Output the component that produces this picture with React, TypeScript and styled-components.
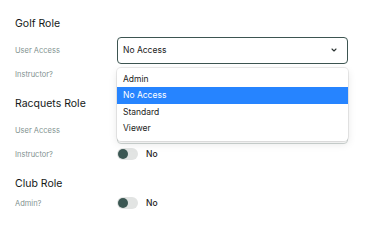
import React from "react";
import styled, { createGlobalStyle } from "styled-components";

const GlobalStyle = createGlobalStyle`
  html, body {
    margin: 0;
    padding: 0;
    background: #fff;
    font-family: Inter, "Noto Sans", Arial, sans-serif;
  }
`;

const Page = styled.div`
  width: 371px;
  height: 250px;
  padding: 16px 0 0 15px;
  box-sizing: border-box;
  display: flex;
  flex-direction: column;
`;

const SectionTitle = styled.h3`
  margin: 0 0 1px 0;
  height: 16px;
  line-height: 16px;
  font-size: 10.5px;
  font-weight: 400;
  color: #141817;
`;

const Section = styled.div`
  display: flex;
  flex-direction: column;
  & + & {
    margin-top: 12px;
  }
`;

const Row = styled.div<{ $tall?: boolean }>`
  display: flex;
  align-items: center;
  height: ${(p) => (p.$tall ? "28px" : "20px")};
  margin-top: ${(p) => (p.$tall ? "3px" : "0")};
`;

const Label = styled.div`
  width: 102px;
  flex-shrink: 0;
  font-size: 7.5px;
  color: #7f928f;
`;

const SelectWrap = styled.div`
  position: relative;
  width: 231px;
  height: 27px;
`;

const SelectBox = styled.div<{ $open?: boolean }>`
  box-sizing: border-box;
  height: 100%;
  border: 1.5px solid ${(p) => (p.$open ? "#3d5551" : "#cfd6d4")};
  border-radius: 4px;
  display: flex;
  align-items: center;
  justify-content: space-between;
  padding: 0 9px 0 5px;
  font-size: 8.5px;
  color: #222;
  background: #fff;
`;

const Menu = styled.div`
  position: absolute;
  top: 31px;
  left: 0;
  right: 0;
  z-index: 2;
  background: #fff;
  border-radius: 4px;
  padding: 3px 0 4px;
  box-shadow: 0 0 0 1px rgba(0, 0, 0, 0.08), 0 3px 8px rgba(0, 0, 0, 0.1);
`;

const Option = styled.div<{ $active?: boolean }>`
  height: 16.5px;
  line-height: 16.5px;
  padding: 0 6px;
  font-size: 8.5px;
  color: ${(p) => (p.$active ? "#fff" : "#222")};
  background: ${(p) => (p.$active ? "#2684ff" : "transparent")};
`;

const Toggle = styled.div`
  position: relative;
  width: 21px;
  height: 12px;
  border-radius: 6px;
  background: #e2e4e3;
  flex-shrink: 0;
`;

const Knob = styled.span`
  position: absolute;
  left: 1px;
  top: 1px;
  width: 10px;
  height: 10px;
  border-radius: 50%;
  background: #3b5753;
`;

const ToggleText = styled.span`
  margin-left: 8px;
  font-size: 8.5px;
  font-weight: 500;
  color: #1f2423;
`;

function Chevron() {
  return (
    <svg width="8" height="8" viewBox="0 0 24 24" fill="none" stroke="#2b3332" strokeWidth="3.2" strokeLinecap="round" strokeLinejoin="round">
      <path d="M6 9l6 6 6-6" />
    </svg>
  );
}

function SelectField({ value, open }: { value: string; open?: boolean }) {
  const options = ["Admin", "No Access", "Standard", "Viewer"];
  return (
    <SelectWrap>
      <SelectBox $open={open}>
        <span>{value}</span>
        <Chevron />
      </SelectBox>
      {open && (
        <Menu>
          {options.map((o) => (
            <Option key={o} $active={o === value}>
              {o}
            </Option>
          ))}
        </Menu>
      )}
    </SelectWrap>
  );
}

function SwitchField({ label }: { label: string }) {
  return (
    <Row>
      <Label>{label}</Label>
      <Toggle>
        <Knob />
      </Toggle>
      <ToggleText>No</ToggleText>
    </Row>
  );
}

export default function App() {
  return (
    <>
      <GlobalStyle />
      <Page>
        <Section>
          <SectionTitle>Golf Role</SectionTitle>
          <Row $tall>
            <Label>User Access</Label>
            <SelectField value="No Access" open />
          </Row>
          <SwitchField label="Instructor?" />
        </Section>
        <Section>
          <SectionTitle>Racquets Role</SectionTitle>
          <Row $tall>
            <Label>User Access</Label>
            <SelectField value="No Access" />
          </Row>
          <SwitchField label="Instructor?" />
        </Section>
        <Section>
          <SectionTitle>Club Role</SectionTitle>
          <SwitchField label="Admin?" />
        </Section>
      </Page>
    </>
  );
}
